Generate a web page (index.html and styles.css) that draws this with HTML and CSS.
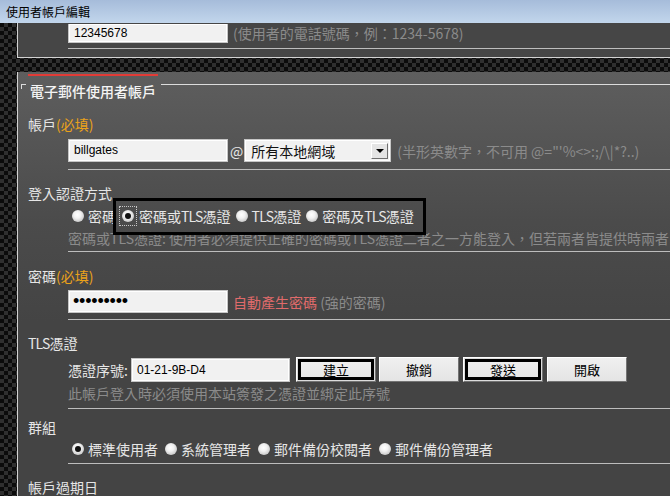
FILE: index.html
```html
<!DOCTYPE html>
<html>
<head>
<meta charset="utf-8">
<link rel="stylesheet" href="styles.css">
</head>
<body>
<div class="titlebar">使用者帳戶編輯</div>
<div class="desk">
  <div class="panel-top">
    <div class="row indent">
      <div class="field field-cut">12345678</div>
      <span class="hint hint-gap">(使用者的電話號碼，例：1234-5678)</span>
    </div>
    <div class="rule rule-top"></div>
  </div>
  <div class="panel-main">
    <div class="redbar"></div>
    <div class="legend">
      <span class="tick"></span>
      <span class="legend-text">電子郵件使用者帳戶</span>
      <span class="legend-line"></span>
    </div>

    <div class="label s1">帳戶<span class="req">(必填)</span></div>
    <div class="row indent r1">
      <div class="field">billgates</div>
      <span class="at">@</span>
      <div class="select">
        <span>所有本地網域</span>
        <span class="drop"><span class="tri"></span></span>
      </div>
      <span class="hint hint-gap2">(半形英數字，不可用 @="'%&lt;&gt;:;/\|*?..)</span>
    </div>
    <div class="rule m7"></div>

    <div class="label s2">登入認證方式</div>
    <div class="row indent radios auth">
      <span class="opt"><span class="radio"></span><span class="rl">密碼</span></span>
      <span class="opt o2"><span class="dotted"><span class="radio on"></span></span><span class="rl rl2">密碼或<span class="tls">TLS</span>憑證</span></span>
      <span class="opt o3"><span class="radio"></span><span class="rl"><span class="tls">TLS</span>憑證</span></span>
      <span class="opt o4"><span class="radio"></span><span class="rl">密碼及<span class="tls">TLS</span>憑證</span></span>
      <span class="focusbox"></span>
    </div>
    <div class="desc indent">密碼或TLS憑證: 使用者必須提供正確的密碼或TLS憑證二者之一方能登入，但若兩者皆提供時兩者皆必須正確</div>
    <div class="rule m4"></div>

    <div class="label s3">密碼<span class="req">(必填)</span></div>
    <div class="row indent r3">
      <div class="field pw">•••••••••</div>
      <span class="gen">自動產生密碼</span><span class="hint">&nbsp;(強的密碼)</span>
    </div>
    <div class="rule m6"></div>

    <div class="label s4"><span class="tls">TLS</span>憑證</div>
    <div class="row indent r4">
      <span class="certlabel">憑證序號:</span>
      <div class="field cert">01-21-9B-D4</div>
      <span class="btn focus b1">建立</span>
      <span class="btn b2">撤銷</span>
      <span class="btn focus b3">發送</span>
      <span class="btn b4">開啟</span>
    </div>
    <div class="note indent">此帳戶登入時必須使用本站簽發之憑證並綁定此序號</div>
    <div class="rule m6"></div>

    <div class="label s5">群組</div>
    <div class="row indent radios grp">
      <span class="opt"><span class="radio on"></span><span class="rl">標準使用者</span></span>
      <span class="opt g"><span class="radio"></span><span class="rl">系統管理者</span></span>
      <span class="opt g"><span class="radio"></span><span class="rl">郵件備份校閱者</span></span>
      <span class="opt g"><span class="radio"></span><span class="rl">郵件備份管理者</span></span>
    </div>
    <div class="rule m4"></div>

    <div class="label s6">帳戶過期日</div>
  </div>
</div>
</body>
</html>
```
FILE: styles.css
```css
html, body {
  margin: 0;
  padding: 0;
}
body {
  width: 670px;
  height: 496px;
  overflow: hidden;
  font-family: "Noto Sans CJK TC", "Noto Sans", sans-serif;
  font-size: 14px;
  background: #000;
}
.titlebar {
  height: 23px;
  line-height: 24px;
  padding-left: 6px;
  font-size: 12px;
  color: #000;
  background: linear-gradient(#a6bcda, #c2d6ec);
}
.desk {
  height: 473px;
  padding-left: 17px;
  overflow: hidden;
  background: repeating-conic-gradient(#2f2f2f 0 25%, #0b0b0b 0 50%) 0 0 / 8px 8px;
}
.panel-top {
  height: 34px;
  border-left: 1px solid #d2d2d2;
  border-bottom: 1px solid #d2d2d2;
  background: #464646;
  margin-bottom: 14px;
}
.panel-main {
  height: 440px;
  border-left: 1px solid #d2d2d2;
  background: linear-gradient(#5e5e5e 0, #4b4b4b 150px, #444 250px, #444 100%);
  overflow: hidden;
}
.row {
  display: flex;
  align-items: center;
}
.indent {
  margin-left: 50px;
}
.rule {
  margin-left: 50px;
  height: 1px;
  background: #bdbdbd;
}
.rule-top { margin-top: 5px; }
.m4 { margin-top: 4px; }
.m5 { margin-top: 5px; }
.m6 { margin-top: 6px; }
.m7 { margin-top: 7px; }

.tls { letter-spacing: -0.8px; }

.field {
  width: 160px;
  height: 23px;
  box-sizing: border-box;
  border: 1px solid #c6c6c6;
  box-shadow: inset 0 0 0 1px #fff;
  background: #f1f1f1;
  padding-left: 5px;
  font-family: "Liberation Sans", Arial, sans-serif;
  font-size: 12px;
  line-height: 21px;
  color: #000;
  flex: none;
}
.field-cut {
  height: 19px;
  border-top: none;
  line-height: 19px;
}
.hint {
  color: #8b8b8b;
  white-space: nowrap;
}
.hint-gap { margin-left: 5px; }
.hint-gap2 { margin-left: 6px; }

.redbar {
  margin: 2px 0 0 10px;
  width: 130px;
  height: 2px;
  background: #e23b36;
}
.legend {
  display: flex;
  align-items: flex-start;
  margin-top: 7px;
  height: 16px;
}
.tick {
  margin: 1px 0 0 3px;
  width: 4px;
  height: 4px;
  border-top: 1px solid #dcdcdc;
  border-left: 1px solid #dcdcdc;
  flex: none;
}
.legend-text {
  margin-left: 4px;
  font-size: 14px;
  line-height: 16px;
  color: #f4f4f4;
  font-weight: 500;
  white-space: nowrap;
}
.legend-line {
  flex: 1;
  margin: 1px 0 0 5px;
  border-top: 1px solid #dcdcdc;
}

.label {
  margin-left: 10px;
  height: 20px;
  line-height: 20px;
  color: #e6e6e6;
  white-space: nowrap;
}
.req { color: #eaa21a; }
.s1 { margin-top: 15px; }
.s2 { margin-top: 13px; }
.s3 { margin-top: 14px; }
.s4 { margin-top: 13px; }
.s5 { margin-top: 8px; }
.s6 { margin-top: 13px; }

.r1 { margin-top: 5px; height: 23px; }
.at {
  margin-left: 2px;
  color: #e8e8e8;
  line-height: 20px;
}
.select {
  width: 147px;
  height: 23px;
  box-sizing: border-box;
  margin-left: 1px;
  border: 1px solid #c6c6c6;
  box-shadow: inset 0 0 0 1px #fff;
  background: #f1f1f1;
  padding-left: 6px;
  display: flex;
  align-items: center;
  justify-content: space-between;
  color: #111;
  font-size: 14px;
  flex: none;
}
.drop {
  width: 17px;
  height: 16px;
  box-sizing: border-box;
  margin-right: 2px;
  background: #e4e4e4;
  border: 1px solid;
  border-color: #fff #6f6f6f #6f6f6f #fff;
  display: flex;
  align-items: center;
  justify-content: center;
}
.tri {
  width: 0;
  height: 0;
  border-left: 4px solid transparent;
  border-right: 4px solid transparent;
  border-top: 4px solid #000;
}

.radios {
  height: 20px;
  padding-left: 4px;
  color: #e6e6e6;
  white-space: nowrap;
}
.auth {
  margin-top: 3px;
  position: relative;
}
.opt {
  display: inline-flex;
  align-items: center;
  height: 20px;
}
.radio {
  position: relative;
  width: 12px;
  height: 12px;
  border-radius: 50%;
  background: radial-gradient(circle at 45% 40%, #ffffff 0, #f2f2f2 35%, #c9c9c9 75%, #8e8e8e 100%);
  flex: none;
}
.radio.on::after {
  content: "";
  position: absolute;
  left: 3px;
  top: 3px;
  width: 6px;
  height: 6px;
  border-radius: 50%;
  background: #111;
}
.rl {
  margin-left: 4px;
  line-height: 20px;
}
.rl2 { margin-left: 2px; }
.o2 { margin-left: 3px; }
.o3 { margin-left: 5px; }
.o4 { margin-left: 5px; }
.dotted {
  display: inline-flex;
  align-items: center;
  box-sizing: border-box;
  height: 20px;
  padding: 0 2px;
  border: 1px dotted #c8c8c8;
}
.focusbox {
  position: absolute;
  left: 45px;
  top: -8px;
  width: 313px;
  height: 37px;
  box-sizing: border-box;
  border: 3px solid #000;
  pointer-events: none;
}
.desc {
  margin-top: 3px;
  height: 18px;
  line-height: 18px;
  color: #8b8b8b;
  white-space: nowrap;
  overflow: hidden;
}
.note {
  margin-top: 2px;
  height: 18px;
  line-height: 18px;
  color: #8b8b8b;
  white-space: nowrap;
}

.r3 { margin-top: 4px; height: 23px; }
.pw {
  font-size: 18px;
  letter-spacing: -0.2px;
  line-height: 20px;
  padding-left: 4px;
}
.gen {
  margin-left: 5px;
  color: #e06b6b;
  white-space: nowrap;
}

.r4 { margin-top: 4px; height: 25px; }
.certlabel {
  width: 63px;
  color: #e6e6e6;
  white-space: nowrap;
  flex: none;
}
.cert {
  width: 159px;
  height: 24px;
  line-height: 22px;
}
.btn {
  width: 80px;
  height: 25px;
  box-sizing: border-box;
  background: linear-gradient(#f0f0f0, #e4e4e4);
  border: 1px solid;
  border-color: #ffffff #737373 #737373 #ffffff;
  display: flex;
  align-items: center;
  justify-content: center;
  font-size: 13px;
  color: #000;
  flex: none;
}
.b1 { margin-left: 6px; }
.b2 { margin-left: 3px; }
.b3 { margin-left: 4px; }
.b4 { margin-left: 4px; }
.btn.focus {
  box-shadow: inset 0 0 0 1px #dcdcdc, inset 0 0 0 4px #000;
}

.grp { margin-top: 2px; }
.g { margin-left: 7px; }
```
